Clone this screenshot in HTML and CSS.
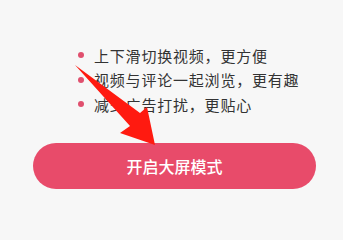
FILE: index.html
```html
<!DOCTYPE html>
<html lang="zh">
<head>
<meta charset="utf-8">
<link rel="stylesheet" href="styles.css">
</head>
<body>
<div class="page">
  <ul class="features">
    <li class="feature"><span class="dot"></span>上下滑切换视频，更方便</li>
    <li class="feature"><span class="dot"></span>视频与评论一起浏览，更有趣</li>
    <li class="feature"><span class="dot"></span>减少广告打扰，更贴心</li>
  </ul>
  <button class="cta">开启大屏模式</button>
  <svg class="arrow" width="343" height="200" viewBox="0 0 343 200">
    <polygon points="75,65 140,113 147,107 155,145 120,133 130,126" fill="#ff1a10"/>
  </svg>
</div>
</body>
</html>
```
FILE: styles.css
```css
html, body {
  margin: 0;
  padding: 0;
  background: #f7f7f7;
}
.page {
  position: relative;
  width: 343px;
  height: 200px;
  overflow: hidden;
  font-family: "Noto Sans CJK SC", "Noto Sans", sans-serif;
}
.features {
  list-style: none;
  margin: 0;
  padding: 43px 0 0 78px;
}
.feature {
  display: flex;
  align-items: center;
  height: 24.5px;
  font-size: 15px;
  letter-spacing: 0.8px;
  color: #333;
  white-space: nowrap;
}
.dot {
  width: 6px;
  height: 6px;
  border-radius: 50%;
  background: #e0506e;
  margin-right: 10px;
  flex: none;
}
.cta {
  display: block;
  margin: 26.5px 0 0 33px;
  width: 283px;
  height: 46px;
  border: none;
  border-radius: 23px;
  background: #e84b6a;
  color: #fff;
  font-family: "Noto Sans CJK SC", "Noto Sans", sans-serif;
  font-size: 16px;
  font-weight: 500;
  letter-spacing: 0;
  padding: 0;
}
.arrow {
  position: absolute;
  left: 0;
  top: 0;
}
```
